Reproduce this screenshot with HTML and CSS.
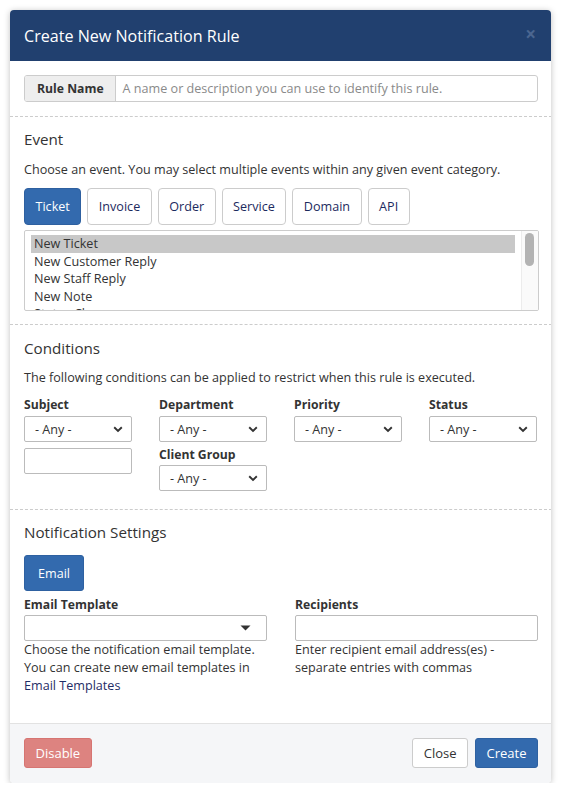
FILE: index.html
```html
<!DOCTYPE html>
<html>
<head>
<meta charset="utf-8">
<link rel="stylesheet" href="styles.css">
</head>
<body>
<div class="modal">
  <div class="modal-header">
    <div class="modal-title">Create New Notification Rule</div>
    <span class="close">×</span>
  </div>
  <div class="modal-body">
    <div class="input-group">
      <span class="addon">Rule Name</span>
      <span class="input-text placeholder">A name or description you can use to identify this rule.</span>
    </div>

    <div class="section sec-event">
      <h4>Event</h4>
      <p class="desc">Choose an event. You may select multiple events within any given event category.</p>
      <div class="tabs">
        <span class="tab active">Ticket</span>
        <span class="tab">Invoice</span>
        <span class="tab">Order</span>
        <span class="tab">Service</span>
        <span class="tab">Domain</span>
        <span class="tab">API</span>
      </div>
      <div class="listbox">
        <div class="options">
          <div class="opt selected">New Ticket</div>
          <div class="opt">New Customer Reply</div>
          <div class="opt">New Staff Reply</div>
          <div class="opt">New Note</div>
          <div class="opt">Status Change</div>
        </div>
        <div class="scrolltrack"><div class="thumb"></div></div>
      </div>
    </div>

    <div class="section sec-cond">
      <h4>Conditions</h4>
      <p class="desc">The following conditions can be applied to restrict when this rule is executed.</p>
      <div class="cond-grid">
        <div class="field">
          <label>Subject</label>
          <div class="select"><span>- Any -</span><svg width="10" height="7" viewBox="0 0 10 7"><path d="M1.2 1.3 L5 5 L8.8 1.3" fill="none" stroke="#333" stroke-width="1.9"/></svg></div>
          <div class="text-input small"></div>
        </div>
        <div class="field">
          <label>Department</label>
          <div class="select"><span>- Any -</span><svg width="10" height="7" viewBox="0 0 10 7"><path d="M1.2 1.3 L5 5 L8.8 1.3" fill="none" stroke="#333" stroke-width="1.9"/></svg></div>
          <label class="lbl2">Client Group</label>
          <div class="select"><span>- Any -</span><svg width="10" height="7" viewBox="0 0 10 7"><path d="M1.2 1.3 L5 5 L8.8 1.3" fill="none" stroke="#333" stroke-width="1.9"/></svg></div>
        </div>
        <div class="field">
          <label>Priority</label>
          <div class="select"><span>- Any -</span><svg width="10" height="7" viewBox="0 0 10 7"><path d="M1.2 1.3 L5 5 L8.8 1.3" fill="none" stroke="#333" stroke-width="1.9"/></svg></div>
        </div>
        <div class="field">
          <label>Status</label>
          <div class="select"><span>- Any -</span><svg width="10" height="7" viewBox="0 0 10 7"><path d="M1.2 1.3 L5 5 L8.8 1.3" fill="none" stroke="#333" stroke-width="1.9"/></svg></div>
        </div>
      </div>
    </div>

    <div class="section sec-notif">
      <h4>Notification Settings</h4>
      <span class="btn btn-primary btn-email">Email</span>
      <div class="notif-grid">
        <div class="field">
          <label>Email Template</label>
          <div class="select wide"><span></span><svg width="11" height="6" viewBox="0 0 11 6"><path d="M0.5 0.5 H10.5 L5.5 5.5 Z" fill="#333"/></svg></div>
          <p class="help">Choose the notification email template. You can create new email templates in <a href="#">Email Templates</a></p>
        </div>
        <div class="field">
          <label>Recipients</label>
          <div class="text-input"></div>
          <p class="help">Enter recipient email address(es) - separate entries with commas</p>
        </div>
      </div>
    </div>
  </div>
  <div class="modal-footer">
    <span class="btn btn-danger">Disable</span>
    <div class="right-btns">
      <span class="btn btn-default">Close</span>
      <span class="btn btn-primary">Create</span>
    </div>
  </div>
</div>
</body>
</html>
```

FILE: styles.css
```css
* { box-sizing: border-box; }
html, body { margin: 0; padding: 0; background: #fff; }
body {
  font-family: "Open Sans", "Noto Sans", sans-serif;
  font-size: 12.6px;
  color: #333;
  padding: 10px 14px 0 10px;
}
.modal {
  width: 541px;
  border-radius: 4px;
  box-shadow: 0 1px 6px rgba(0,0,0,0.25);
  background: #fff;
  overflow: hidden;
}
.modal-header {
  height: 51px;
  background: #21406f;
  display: flex;
  align-items: center;
  justify-content: space-between;
  padding: 0 15px 0 14px;
}
.modal-title {
  color: #fff;
  font-size: 16.1px;
  line-height: 22px;
}
.close {
  color: #4b6690;
  font-size: 19px;
  font-weight: bold;
  line-height: 1;
  margin-top: -3px;
}
.modal-body {
  padding: 14px 13px 0 14px;
}
.input-group {
  display: flex;
  height: 27px;
  border: 1px solid #ccc;
  border-radius: 3px;
  overflow: hidden;
}
.addon {
  background: #eee;
  border-right: 1px solid #ccc;
  font-weight: bold;
  font-size: 12.2px;
  display: flex;
  align-items: center;
  padding: 0 11px 0 12px;
  flex: none;
}
.input-text {
  display: flex;
  align-items: center;
  padding: 0 7px;
  flex: 1;
}
.placeholder { color: #8a8a8a; }

.section {
  border-top: 1px dashed #ccc;
  margin: 0 -14px;
  padding: 12px 13px 0 14px;
}
.sec-event { margin-top: 14px; padding-top: 11px; }
.sec-cond { margin-top: 13px; }
.sec-notif { margin-top: 18px; padding-top: 11px; padding-bottom: 28px; }
h4 {
  font-size: 15.2px;
  font-weight: normal;
  line-height: 22px;
  margin: 0 0 10px;
}
.sec-event h4 { margin-bottom: 11px; }
.desc {
  margin: 0 0 9px;
  line-height: 18px;
}
.tabs {
  display: flex;
  gap: 6px;
}
.tab {
  height: 37px;
  padding: 0 10.5px;
  border: 1px solid #ccc;
  border-radius: 4px;
  display: flex;
  align-items: center;
  color: #1c2a5e;
}
.tab.active {
  background: #336aae;
  border-color: #2e60a0;
  color: #fff;
}
.listbox {
  position: relative;
  margin-top: 5px;
  height: 81px;
  border: 1px solid #ccc;
  border-radius: 2px;
  overflow: hidden;
  line-height: 17.5px;
}
.options {
  padding: 4px 0 0 6px;
  margin-right: 23px;
}
.opt { padding-left: 3px; white-space: nowrap; }
.opt.selected { background: #c8c8c8; }
.scrolltrack {
  position: absolute;
  top: 0;
  right: 0;
  bottom: 0;
  width: 17px;
  border-left: 1px solid #ececec;
  background: #fafafa;
}
.thumb {
  position: absolute;
  top: 2px;
  left: 3px;
  width: 9px;
  height: 33px;
  border-radius: 5px;
  background: #b3b3b3;
}

.cond-grid {
  display: grid;
  grid-template-columns: repeat(4, 108px);
  column-gap: 27px;
  margin-top: 1px;
}
.field { display: flex; flex-direction: column; }
label {
  font-weight: bold;
  font-size: 12.2px;
  line-height: 18px;
  margin-bottom: 2px;
}
.lbl2 { margin-top: 4px; margin-bottom: 1px; }
.select {
  height: 26px;
  border: 1px solid #bbb;
  border-radius: 2px;
  display: flex;
  align-items: center;
  justify-content: space-between;
  padding: 0 8px 0 10px;
  background: #fff;
}
.select.wide { padding-right: 15px; }
.text-input {
  height: 26px;
  border: 1px solid #bbb;
  border-radius: 2px;
}
.text-input.small { margin-top: 6px; }

.btn {
  display: inline-flex;
  align-items: center;
  justify-content: center;
  border-radius: 3px;
  border: 1px solid transparent;
  padding: 0 10px;
  height: 30px;
}
.modal-footer .btn { font-size: 13px; padding: 0 10.5px; }
.btn-primary { background: #336aae; border-color: #2e61a1; color: #fff; }
.btn-email { height: 36px; padding: 0 13px; margin-top: 2px; }
.btn-danger { background: #dd8380; border-color: #d67572; color: #fff; }
.btn-default { background: #fff; border-color: #ccc; color: #333; }

.notif-grid {
  display: grid;
  grid-template-columns: 243px 243px;
  column-gap: 28px;
  margin-top: 5px;
}
.notif-grid label { margin-bottom: 1px; }
.help {
  margin: 0;
  line-height: 18px;
}
.help a { color: #1f2d66; text-decoration: none; }

.modal-footer {
  border-top: 1px solid #e2e2e2;
  background: #f5f6f8;
  padding: 14px 13px 15px 14px;
  display: flex;
  justify-content: space-between;
}
.right-btns { display: flex; gap: 7px; }
```
